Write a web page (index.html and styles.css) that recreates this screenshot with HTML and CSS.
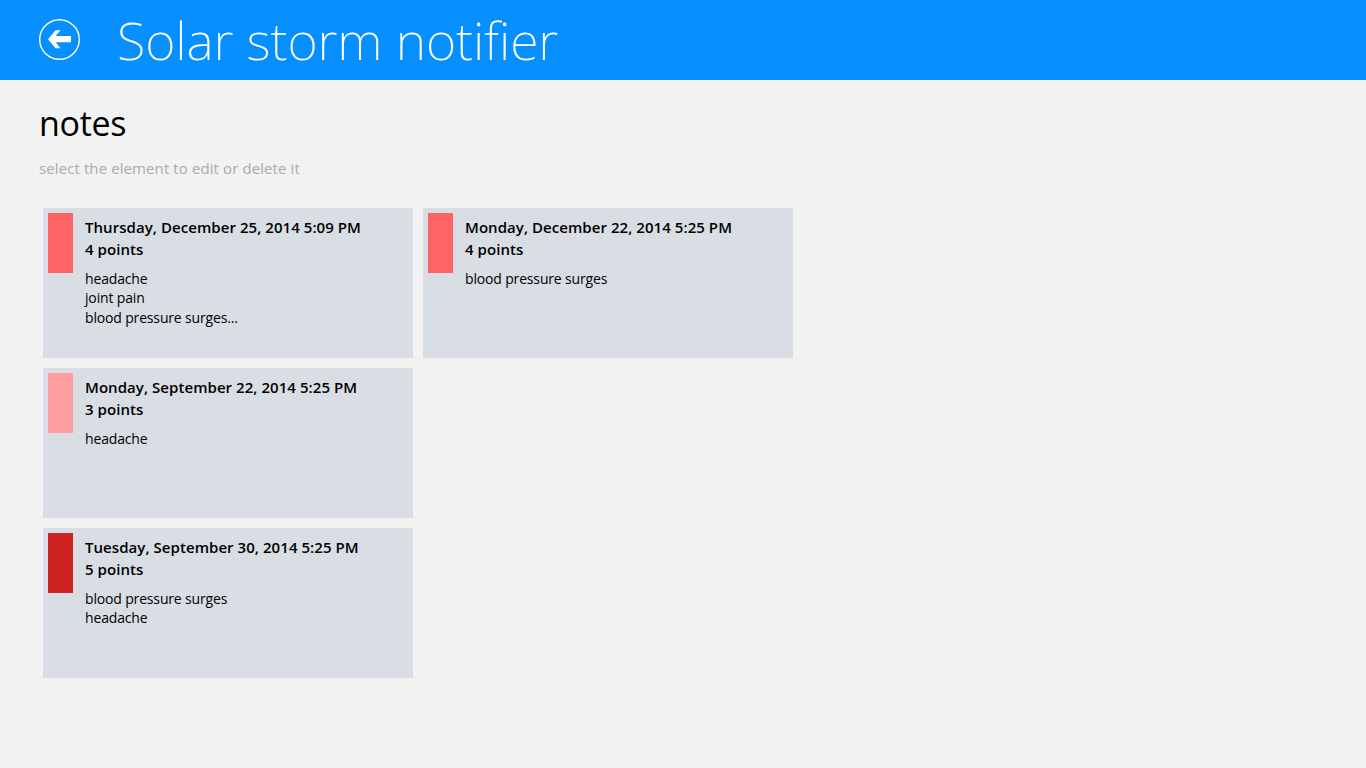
FILE: index.html
```html
<!DOCTYPE html>
<html lang="en">
<head>
<meta charset="utf-8">
<title>Solar storm notifier</title>
<link rel="stylesheet" href="styles.css">
</head>
<body>
<header class="topbar">
  <svg class="back" width="42" height="42" viewBox="0 0 42 42" aria-label="Back">
    <circle cx="21.5" cy="21.5" r="19.8" fill="none" stroke="#fff" stroke-width="1.4"/>
    <path d="M10 21.2 L17.6 12.3 H22.6 L17.6 18 H33 V24.3 H17.6 L22.6 30.3 H17.6 Z" fill="#fff"/>
  </svg>
  <h1 class="app-title">Solar storm notifier</h1>
</header>
<main class="content">
  <h2 class="section-title">notes</h2>
  <p class="hint">select the element to edit or delete it</p>
  <div class="notes">
    <article class="note">
      <div class="swatch level-4"></div>
      <div class="note-body">
        <div class="note-date">Thursday, December 25, 2014 5:09 PM</div>
        <div class="note-points">4 points</div>
        <div class="note-text">headache<br>joint pain<br>blood pressure surges...</div>
      </div>
    </article>
    <article class="note">
      <div class="swatch level-3"></div>
      <div class="note-body">
        <div class="note-date">Monday, September 22, 2014 5:25 PM</div>
        <div class="note-points">3 points</div>
        <div class="note-text">headache</div>
      </div>
    </article>
    <article class="note">
      <div class="swatch level-5"></div>
      <div class="note-body">
        <div class="note-date">Tuesday, September 30, 2014 5:25 PM</div>
        <div class="note-points">5 points</div>
        <div class="note-text">blood pressure surges<br>headache</div>
      </div>
    </article>
    <article class="note">
      <div class="swatch level-4"></div>
      <div class="note-body">
        <div class="note-date">Monday, December 22, 2014 5:25 PM</div>
        <div class="note-points">4 points</div>
        <div class="note-text">blood pressure surges</div>
      </div>
    </article>
  </div>
</main>
</body>
</html>
```
FILE: styles.css
```css
* { box-sizing: border-box; }
html, body { margin: 0; height: 100%; }
body {
  background: #f2f2f2;
  color: #000;
  font-family: "Open Sans", "Noto Sans", sans-serif;
  overflow: hidden;
}
.topbar {
  height: 80px;
  background: #068fff;
  display: flex;
  align-items: center;
  padding-left: 39px;
  gap: 37px;
  color: #fff;
}
.back { flex: none; margin: 0 0 2px -1px; }
.app-title {
  margin: 0;
  font-family: "Noto Sans", "Open Sans", sans-serif;
  font-size: 52px;
  font-weight: 200;
  line-height: 80px;
  letter-spacing: -0.12px;
}
.content { padding: 19px 0 0 39px; }
.section-title {
  margin: 0;
  font-size: 34px;
  font-weight: 400;
  line-height: 48px;
  letter-spacing: -0.3px;
}
.hint {
  margin: 11px 0 0;
  font-size: 15px;
  line-height: 20px;
  color: #ababab;
  letter-spacing: 0.1px;
}
.notes {
  margin: 30px 0 0 4px;
  display: grid;
  grid-auto-flow: column;
  grid-template-rows: repeat(3, 150px);
  grid-auto-columns: 370px;
  gap: 10px;
}
.note {
  background: #d9dde4;
  padding: 5px;
  display: flex;
  gap: 12px;
}
.swatch { width: 25px; height: 60px; flex: none; }
.level-3 { background: #ff9f9f; }
.level-4 { background: #ff6363; }
.level-5 { background: #cf2222; }
.note-body { padding-top: 3px; }
.note-date, .note-points {
  font-size: 15px;
  font-weight: 600;
  line-height: 22px;
  letter-spacing: 0.06px;
}
.note-text {
  margin-top: 8.7px;
  font-size: 14px;
  line-height: 19.5px;
  letter-spacing: -0.16px;
}
```
